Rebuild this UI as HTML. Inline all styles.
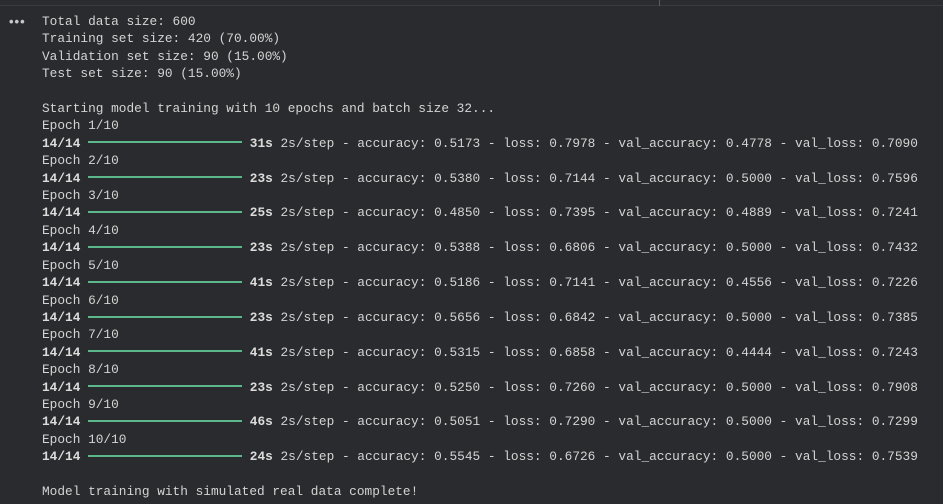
<!DOCTYPE html>
<html><head><meta charset="utf-8"><style>
html,body{margin:0;padding:0;background:#2a2b2e;width:943px;height:504px;overflow:hidden}
.top{position:absolute;left:0;top:0;width:943px;height:5px;background:#2b2c2f;border-bottom:1px solid #3a3b3e}
.tick{position:absolute;left:659px;top:0;width:1px;height:6px;background:#5a5b5e}
.dots{position:absolute;left:9px;top:14px;color:#c8c8c8;font:bold 13px "Liberation Sans",sans-serif;letter-spacing:1px}
pre{position:absolute;left:42px;top:13px;margin:0;font-family:"Liberation Mono",monospace;font-size:12.8px;line-height:17.4px;color:#d4d4d4}
b{font-weight:bold;color:#dcdcdc}
.bar{display:inline-block;width:154px;height:2px;background:#5cb88a;vertical-align:middle;margin-top:-2px}
</style></head><body>
<div class="top"></div><div class="tick"></div>
<div class="dots">•••</div>
<pre>Total data size: 600
Training set size: 420 (70.00%)
Validation set size: 90 (15.00%)
Test set size: 90 (15.00%)

Starting model training with 10 epochs and batch size 32...
Epoch 1/10
<b>14/14</b> <span class="bar"></span> <b>31s</b> 2s/step - accuracy: 0.5173 - loss: 0.7978 - val_accuracy: 0.4778 - val_loss: 0.7090
Epoch 2/10
<b>14/14</b> <span class="bar"></span> <b>23s</b> 2s/step - accuracy: 0.5380 - loss: 0.7144 - val_accuracy: 0.5000 - val_loss: 0.7596
Epoch 3/10
<b>14/14</b> <span class="bar"></span> <b>25s</b> 2s/step - accuracy: 0.4850 - loss: 0.7395 - val_accuracy: 0.4889 - val_loss: 0.7241
Epoch 4/10
<b>14/14</b> <span class="bar"></span> <b>23s</b> 2s/step - accuracy: 0.5388 - loss: 0.6806 - val_accuracy: 0.5000 - val_loss: 0.7432
Epoch 5/10
<b>14/14</b> <span class="bar"></span> <b>41s</b> 2s/step - accuracy: 0.5186 - loss: 0.7141 - val_accuracy: 0.4556 - val_loss: 0.7226
Epoch 6/10
<b>14/14</b> <span class="bar"></span> <b>23s</b> 2s/step - accuracy: 0.5656 - loss: 0.6842 - val_accuracy: 0.5000 - val_loss: 0.7385
Epoch 7/10
<b>14/14</b> <span class="bar"></span> <b>41s</b> 2s/step - accuracy: 0.5315 - loss: 0.6858 - val_accuracy: 0.4444 - val_loss: 0.7243
Epoch 8/10
<b>14/14</b> <span class="bar"></span> <b>23s</b> 2s/step - accuracy: 0.5250 - loss: 0.7260 - val_accuracy: 0.5000 - val_loss: 0.7908
Epoch 9/10
<b>14/14</b> <span class="bar"></span> <b>46s</b> 2s/step - accuracy: 0.5051 - loss: 0.7290 - val_accuracy: 0.5000 - val_loss: 0.7299
Epoch 10/10
<b>14/14</b> <span class="bar"></span> <b>24s</b> 2s/step - accuracy: 0.5545 - loss: 0.6726 - val_accuracy: 0.5000 - val_loss: 0.7539

Model training with simulated real data complete!</pre>
</body></html>
